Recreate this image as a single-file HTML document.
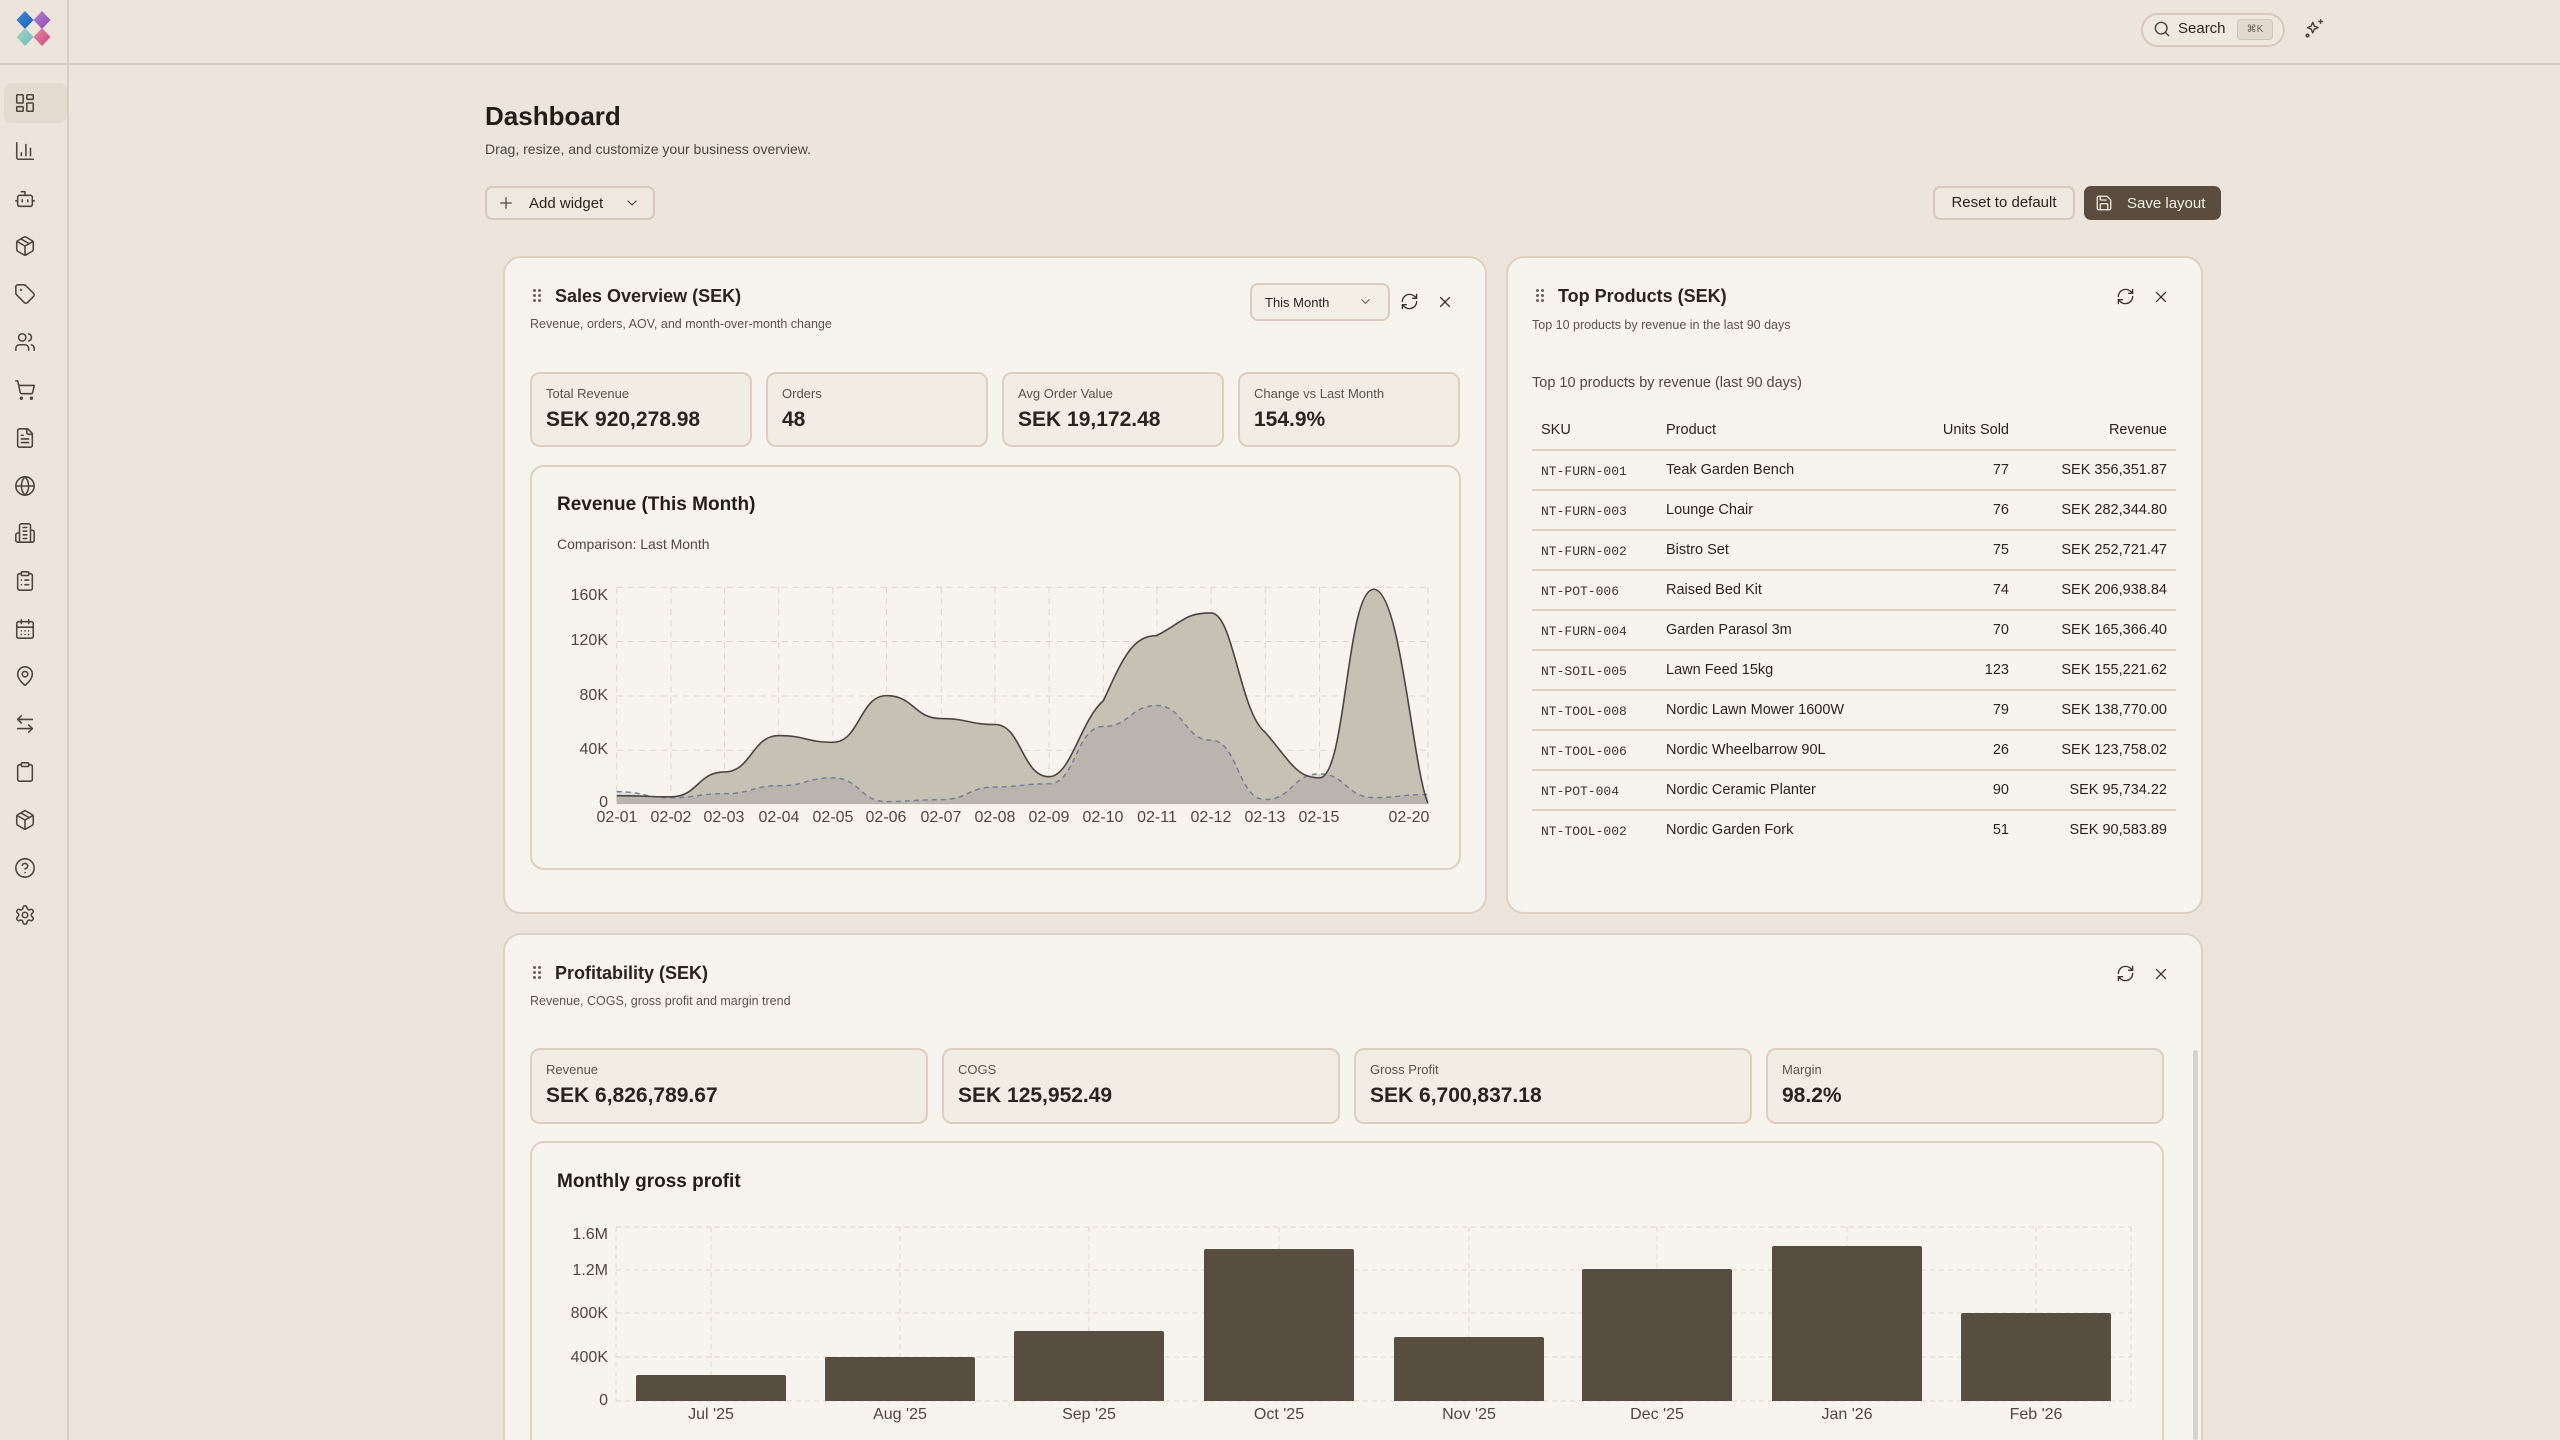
<!DOCTYPE html>
<html style="width:2560px;height:1440px;overflow:hidden"><head><meta charset="utf-8">
<style>
*{box-sizing:border-box;margin:0;padding:0}
body{width:2560px;height:1440px;overflow:hidden;background:#ede5dc;font-family:"Liberation Sans",sans-serif;color:#2a241f;position:relative}
.a{position:absolute}
.ic{position:absolute;width:22px;height:22px;fill:none;stroke:#4f453b;stroke-width:1.7;stroke-linecap:round;stroke-linejoin:round}
.card{position:absolute;background:#f7f4ee;border:2px solid #ddd1c4;border-radius:18px}
.stat{position:absolute;background:#f1ece4;border:2px solid #dccfc1;border-radius:10px}
.stat .l{position:absolute;left:14px;top:12px;font-size:13px;color:#5b534b}
.stat .v{position:absolute;left:14px;top:34px;font-size:21px;font-weight:bold;color:#2a241f}
.ttl{font-size:18px;font-weight:bold}
.sub{font-size:12.5px;color:#5b534b}
.drag{position:absolute;width:8px;height:14px}
.drag i{position:absolute;width:3px;height:3px;background:#6a6158;border-radius:50%}
.row{position:absolute;left:1532px;width:644px;height:40px;border-bottom:2px solid #ddd1c4;font-size:14.5px}
.row span{position:absolute;top:11px}
.sku{left:9px;font-family:"Liberation Mono",monospace;font-size:13px;top:13px!important;color:#3a332c}
.pr{left:134px}
.un{right:167px}
.rv{right:9px}
.yl{position:absolute;font-size:16px;color:#4f473f;text-align:right;width:60px}
.xl{position:absolute;font-size:16px;color:#4f473f;width:80px;text-align:center}
.bar{position:absolute;background:#584d41;width:150px;border-radius:2px 2px 0 0}
</style></head><body>
<!-- header -->
<div class="a" style="left:0;top:63px;width:2560px;height:2px;background:#d8cdc0"></div>
<div class="a" style="left:67px;top:0;width:2px;height:1440px;background:#d8cdc0"></div>
<svg class="a" style="left:0;top:0" width="70" height="60" viewBox="0 0 70 60">
<defs>
<linearGradient id="g1" x1="0" y1="0" x2="1" y2="1"><stop offset="0" stop-color="#3a8fd8"/><stop offset="1" stop-color="#1f5fb8"/></linearGradient>
<linearGradient id="g2" x1="0" y1="0" x2="1" y2="1"><stop offset="0" stop-color="#b77fd0"/><stop offset="1" stop-color="#8a4ab0"/></linearGradient>
<linearGradient id="g3" x1="0" y1="0" x2="1" y2="1"><stop offset="0" stop-color="#9fd8cf"/><stop offset="1" stop-color="#6fbab0"/></linearGradient>
<linearGradient id="g4" x1="0" y1="0" x2="1" y2="1"><stop offset="0" stop-color="#e58aa8"/><stop offset="1" stop-color="#c84a78"/></linearGradient>
</defs>
<path d="M25 11 L33.5 20 L25 29 L16.5 20Z" fill="url(#g1)"/>
<path d="M42 11 L50.5 20 L42 29 L33.5 20Z" fill="url(#g2)"/>
<path d="M25 28 L33.5 37 L25 46 L16.5 37Z" fill="url(#g3)"/>
<path d="M42 28 L50.5 37 L42 46 L33.5 37Z" fill="url(#g4)"/>
</svg>
<div class="a" style="left:2141px;top:13px;width:144px;height:34px;border:2px solid #d6c9bb;border-radius:17px;background:#efe8df"></div>
<svg class="ic" style="left:2152px;top:19px;width:20px;height:20px" viewBox="0 0 24 24"><circle cx="11" cy="11" r="7"/><path d="m20 20-4-4"/></svg>
<div class="a" style="left:2178px;top:20px;font-size:15px;color:#2f2822">Search</div>
<div class="a" style="left:2237px;top:19px;width:36px;height:21px;background:#e2d9cf;border:1px solid #d1c5b7;border-radius:4px;font-size:10px;color:#6a6158;text-align:center;line-height:19px">⌘K</div>
<svg class="ic" style="left:2304px;top:18px;width:21px;height:21px" viewBox="0 0 24 24"><path d="M10 5l1.8 4.2L16 11l-4.2 1.8L10 17l-1.8-4.2L4 11l4.2-1.8z"/><path d="M19 2v4M17 4h4"/><circle cx="4" cy="20" r="1.5"/></svg>

<!-- sidebar -->
<div class="a" style="left:4px;top:83px;width:63px;height:40px;background:#e3dad0;border-radius:8px"></div>
<svg class="ic" style="left:14px;top:92px" viewBox="0 0 24 24"><rect x="3" y="3" width="7" height="9" rx="1"/><rect x="14" y="3" width="7" height="5" rx="1"/><rect x="14" y="12" width="7" height="9" rx="1"/><rect x="3" y="16" width="7" height="5" rx="1"/></svg>
<svg class="ic" style="left:14px;top:140px" viewBox="0 0 24 24"><path d="M3 3v16a2 2 0 0 0 2 2h16"/><path d="M18 17V9"/><path d="M13 17V5"/><path d="M8 17v-3"/></svg>
<svg class="ic" style="left:14px;top:188px" viewBox="0 0 24 24"><path d="M12 8V4H8"/><rect width="16" height="12" x="4" y="8" rx="2"/><path d="M2 14h2M20 14h2M15 13v2M9 13v2"/></svg>
<svg class="ic" style="left:14px;top:235px" viewBox="0 0 24 24"><path d="M11 21.73a2 2 0 0 0 2 0l7-4A2 2 0 0 0 21 16V8a2 2 0 0 0-1-1.73l-7-4a2 2 0 0 0-2 0l-7 4A2 2 0 0 0 3 8v8a2 2 0 0 0 1 1.73z"/><path d="M12 22V12"/><path d="M3.3 7 12 12l8.7-5"/><path d="m7.5 4.27 9 5.15"/></svg>
<svg class="ic" style="left:14px;top:283px" viewBox="0 0 24 24"><path d="M12.586 2.586A2 2 0 0 0 11.172 2H4a2 2 0 0 0-2 2v7.172a2 2 0 0 0 .586 1.414l8.704 8.704a2.426 2.426 0 0 0 3.420 0l6.58-6.58a2.426 2.426 0 0 0 0-3.42z"/><circle cx="7.5" cy="7.5" r=".5"/></svg>
<svg class="ic" style="left:14px;top:331px" viewBox="0 0 24 24"><path d="M16 21v-2a4 4 0 0 0-4-4H6a4 4 0 0 0-4 4v2"/><circle cx="9" cy="7" r="4"/><path d="M22 21v-2a4 4 0 0 0-3-3.87"/><path d="M16 3.13a4 4 0 0 1 0 7.75"/></svg>
<svg class="ic" style="left:14px;top:379px" viewBox="0 0 24 24"><circle cx="8" cy="21" r="1"/><circle cx="19" cy="21" r="1"/><path d="M2.05 2.05h2l2.66 12.42a2 2 0 0 0 2 1.58h9.78a2 2 0 0 0 1.95-1.57l1.65-7.43H5.12"/></svg>
<svg class="ic" style="left:14px;top:427px" viewBox="0 0 24 24"><path d="M15 2H6a2 2 0 0 0-2 2v16a2 2 0 0 0 2 2h12a2 2 0 0 0 2-2V7Z"/><path d="M14 2v4a2 2 0 0 0 2 2h4"/><path d="M10 9H8M16 13H8M16 17H8"/></svg>
<svg class="ic" style="left:14px;top:475px" viewBox="0 0 24 24"><circle cx="12" cy="12" r="10"/><path d="M12 2a14.5 14.5 0 0 0 0 20 14.5 14.5 0 0 0 0-20"/><path d="M2 12h20"/></svg>
<svg class="ic" style="left:14px;top:522px" viewBox="0 0 24 24"><path d="M6 22V4a2 2 0 0 1 2-2h8a2 2 0 0 1 2 2v18Z"/><path d="M6 12H4a2 2 0 0 0-2 2v6a2 2 0 0 0 2 2h2"/><path d="M18 9h2a2 2 0 0 1 2 2v9a2 2 0 0 1-2 2h-2"/><path d="M10 6h4M10 10h4M10 14h4M10 18h4"/></svg>
<svg class="ic" style="left:14px;top:570px" viewBox="0 0 24 24"><rect width="8" height="4" x="8" y="2" rx="1"/><path d="M16 4h2a2 2 0 0 1 2 2v14a2 2 0 0 1-2 2H6a2 2 0 0 1-2-2V6a2 2 0 0 1 2-2h2"/><path d="M12 11h4M12 16h4M8 11h.01M8 16h.01"/></svg>
<svg class="ic" style="left:14px;top:618px" viewBox="0 0 24 24"><path d="M8 2v4M16 2v4"/><rect width="18" height="18" x="3" y="4" rx="2"/><path d="M3 10h18M8 14h.01M12 14h.01M16 14h.01M8 18h.01M12 18h.01M16 18h.01"/></svg>
<svg class="ic" style="left:14px;top:665px" viewBox="0 0 24 24"><path d="M20 10c0 4.993-5.539 10.193-7.399 11.799a1 1 0 0 1-1.202 0C9.539 20.193 4 14.993 4 10a8 8 0 0 1 16 0"/><circle cx="12" cy="10" r="3"/></svg>
<svg class="ic" style="left:14px;top:713px" viewBox="0 0 24 24"><path d="M8 3 4 7l4 4"/><path d="M4 7h16"/><path d="m16 21 4-4-4-4"/><path d="M20 17H4"/></svg>
<svg class="ic" style="left:14px;top:761px" viewBox="0 0 24 24"><rect width="8" height="4" x="8" y="2" rx="1"/><path d="M16 4h2a2 2 0 0 1 2 2v14a2 2 0 0 1-2 2H6a2 2 0 0 1-2-2V6a2 2 0 0 1 2-2h2"/></svg>
<svg class="ic" style="left:14px;top:809px" viewBox="0 0 24 24"><path d="M11 21.73a2 2 0 0 0 2 0l7-4A2 2 0 0 0 21 16V8a2 2 0 0 0-1-1.73l-7-4a2 2 0 0 0-2 0l-7 4A2 2 0 0 0 3 8v8a2 2 0 0 0 1 1.73z"/><path d="M12 22V12"/><path d="M3.3 7 12 12l8.7-5"/><path d="m7.5 4.27 9 5.15"/></svg>
<svg class="ic" style="left:14px;top:857px" viewBox="0 0 24 24"><circle cx="12" cy="12" r="10"/><path d="M9.09 9a3 3 0 0 1 5.83 1c0 2-3 3-3 3"/><path d="M12 17h.01"/></svg>
<svg class="ic" style="left:14px;top:904px" viewBox="0 0 24 24"><path d="M12.22 2h-.44a2 2 0 0 0-2 2v.18a2 2 0 0 1-1 1.73l-.43.25a2 2 0 0 1-2 0l-.15-.08a2 2 0 0 0-2.73.73l-.22.38a2 2 0 0 0 .73 2.730l.15.1a2 2 0 0 1 1 1.72v.51a2 2 0 0 1-1 1.74l-.15.09a2 2 0 0 0-.73 2.73l.22.38a2 2 0 0 0 2.73.73l.15-.08a2 2 0 0 1 2 0l.43.25a2 2 0 0 1 1 1.73V20a2 2 0 0 0 2 2h.44a2 2 0 0 0 2-2v-.18a2 2 0 0 1 1-1.73l.43-.25a2 2 0 0 1 2 0l.15.08a2 2 0 0 0 2.73-.73l.22-.39a2 2 0 0 0-.73-2.73l-.15-.08a2 2 0 0 1-1-1.74v-.5a2 2 0 0 1 1-1.74l.15-.09a2 2 0 0 0 .73-2.73l-.22-.38a2 2 0 0 0-2.73-.73l-.15.08a2 2 0 0 1-2 0l-.43-.25a2 2 0 0 1-1-1.73V4a2 2 0 0 0-2-2z"/><circle cx="12" cy="12" r="3"/></svg>

<!-- page header -->
<div class="a" style="left:485px;top:101px;font-size:26px;font-weight:bold;color:#231d18">Dashboard</div>
<div class="a" style="left:485px;top:141px;font-size:14px;color:#4f473f">Drag, resize, and customize your business overview.</div>
<div class="a" style="left:485px;top:186px;width:170px;height:34px;border:2px solid #d6c9bb;border-radius:7px;background:#efe8df"></div>
<svg class="ic" style="left:497px;top:194px;width:18px;height:18px" viewBox="0 0 24 24"><path d="M12 5v14M5 12h14"/></svg>
<div class="a" style="left:529px;top:195px;font-size:15px;color:#2a241f">Add widget</div>
<svg class="ic" style="left:624px;top:195px;width:16px;height:16px" viewBox="0 0 24 24"><path d="m6 9 6 6 6-6"/></svg>
<div class="a" style="left:1933px;top:186px;width:142px;height:34px;border:2px solid #d6c9bb;border-radius:7px;background:#efe8df;font-size:15px;text-align:center;line-height:30px;color:#2a241f">Reset to default</div>
<div class="a" style="left:2084px;top:186px;width:137px;height:34px;border-radius:7px;background:#5a4d40"></div>
<svg class="ic" style="left:2095px;top:194px;width:18px;height:18px;stroke:#f3ede5" viewBox="0 0 24 24"><path d="M15.2 3a2 2 0 0 1 1.4.6l3.8 3.8a2 2 0 0 1 .6 1.4V19a2 2 0 0 1-2 2H5a2 2 0 0 1-2-2V5a2 2 0 0 1 2-2z"/><path d="M17 21v-7a1 1 0 0 0-1-1H8a1 1 0 0 0-1 1v7"/><path d="M7 3v4a1 1 0 0 0 1 1h7"/></svg>
<div class="a" style="left:2127px;top:195px;font-size:15px;color:#f5efe7">Save layout</div>

<!-- Sales Overview -->
<div class="card" style="left:503px;top:256px;width:984px;height:658px"></div>
<div class="drag" style="left:533px;top:289px"><i style="left:0;top:0"></i><i style="left:5px;top:0"></i><i style="left:0;top:5px"></i><i style="left:5px;top:5px"></i><i style="left:0;top:10px"></i><i style="left:5px;top:10px"></i></div>
<div class="a ttl" style="left:555px;top:286px">Sales Overview (SEK)</div>
<div class="a sub" style="left:530px;top:317px">Revenue, orders, AOV, and month-over-month change</div>
<div class="a" style="left:1250px;top:283px;width:140px;height:38px;border:2px solid #d9ccbe;border-radius:8px;background:#f3eee6;font-size:13px;padding:10px 0 0 13px;color:#2a241f">This Month</div>
<svg class="ic" style="left:1358px;top:294px;width:15px;height:15px;stroke:#6a6158" viewBox="0 0 24 24"><path d="m6 9 6 6 6-6"/></svg>
<svg class="ic" style="left:1400px;top:292px;width:19px;height:19px;stroke:#3a322b" viewBox="0 0 24 24"><path d="M3 12a9 9 0 0 1 9-9 9.75 9.75 0 0 1 6.74 2.74L21 8"/><path d="M21 3v5h-5"/><path d="M21 12a9 9 0 0 1-9 9 9.75 9.75 0 0 1-6.74-2.74L3 16"/><path d="M8 16H3v5"/></svg>
<svg class="ic" style="left:1436px;top:293px;width:18px;height:18px;stroke:#3a322b" viewBox="0 0 24 24"><path d="M18 6 6 18M6 6l12 12"/></svg>

<div class="stat" style="left:530px;top:372px;width:222px;height:75px"><div class="l">Total Revenue</div><div class="v">SEK 920,278.98</div></div>
<div class="stat" style="left:766px;top:372px;width:222px;height:75px"><div class="l">Orders</div><div class="v">48</div></div>
<div class="stat" style="left:1002px;top:372px;width:222px;height:75px"><div class="l">Avg Order Value</div><div class="v">SEK 19,172.48</div></div>
<div class="stat" style="left:1238px;top:372px;width:222px;height:75px"><div class="l">Change vs Last Month</div><div class="v">154.9%</div></div>

<div class="a" style="left:530px;top:465px;width:931px;height:405px;border:2px solid #ddd1c4;border-radius:14px;background:#f7f4ee"></div>
<div class="a" style="left:557px;top:494px;font-size:19px;font-weight:bold;color:#231d18">Revenue (This Month)</div>
<div class="a" style="left:557px;top:536px;font-size:14px;color:#4f473f">Comparison: Last Month</div>
<svg class="a" style="left:500px;top:250px" width="1000" height="620" viewBox="0 0 1568 1568" preserveAspectRatio="none">
<g stroke="#ddd6cc" stroke-dasharray="6 5" fill="none">
<path vector-effect="non-scaling-stroke" d="M183 853H1455M183 990H1455M183 1128H1455M183 1265H1455"/>
<path vector-effect="non-scaling-stroke" d="M183 853V1400M268 853V1400M352 853V1400M437 853V1400M522 853V1400M606 853V1400M692 853V1400M776 853V1400M861 853V1400M946 853V1400M1030 853V1400M1115 853V1400M1200 853V1400M1285 853V1400M1370 853V1400M1455 853V1400"/>
</g>
<path d="M183,1380 C225,1380 226,1383 268,1383 C310,1383 310,1320 352,1320 C394,1320 395,1228 437,1228 C479,1228 480,1245 522,1245 C564,1245 564,1127 606,1127 C649,1127 649,1185 692,1185 C734,1185 734,1200 776,1200 C818,1200 818,1332 861,1332 C895,1332 910,1190 946,1140 C975,1040 990,975 1030,975 C1072,940 1073,918 1115,918 C1150,918 1160,1170 1200,1220 C1242,1300 1250,1335 1285,1335 C1327,1335 1327,858 1370,858 C1412,858 1430,1300 1455,1400 L183,1400Z" fill="#c6c1b5"/>
<path d="M183,1370 C225,1370 226,1385 268,1385 C310,1385 310,1375 352,1375 C394,1375 395,1355 437,1355 C479,1355 480,1335 522,1335 C564,1335 564,1395 606,1395 C649,1395 649,1390 692,1390 C734,1390 734,1358 776,1358 C818,1358 818,1350 861,1350 C903,1350 903,1205 946,1205 C988,1205 988,1152 1030,1152 C1072,1152 1073,1240 1115,1240 C1157,1240 1157,1390 1200,1390 C1242,1390 1242,1325 1285,1325 C1327,1325 1327,1385 1370,1385 C1412,1385 1412,1377 1455,1377 L1455,1400 L183,1400Z" fill="#8e8e94" fill-opacity="0.22"/>
<path d="M183,1370 C225,1370 226,1385 268,1385 C310,1385 310,1375 352,1375 C394,1375 395,1355 437,1355 C479,1355 480,1335 522,1335 C564,1335 564,1395 606,1395 C649,1395 649,1390 692,1390 C734,1390 734,1358 776,1358 C818,1358 818,1350 861,1350 C903,1350 903,1205 946,1205 C988,1205 988,1152 1030,1152 C1072,1152 1073,1240 1115,1240 C1157,1240 1157,1390 1200,1390 C1242,1390 1242,1325 1285,1325 C1327,1325 1327,1385 1370,1385 C1412,1385 1412,1377 1455,1377" fill="none" stroke="#7a7f90" stroke-width="1.5" stroke-dasharray="5 4" vector-effect="non-scaling-stroke"/>
<path d="M183,1380 C225,1380 226,1383 268,1383 C310,1383 310,1320 352,1320 C394,1320 395,1228 437,1228 C479,1228 480,1245 522,1245 C564,1245 564,1127 606,1127 C649,1127 649,1185 692,1185 C734,1185 734,1200 776,1200 C818,1200 818,1332 861,1332 C895,1332 910,1190 946,1140 C975,1040 990,975 1030,975 C1072,940 1073,918 1115,918 C1150,918 1160,1170 1200,1220 C1242,1300 1250,1335 1285,1335 C1327,1335 1327,858 1370,858 C1412,858 1430,1300 1455,1400" fill="none" stroke="#4a4540" stroke-width="1.6" vector-effect="non-scaling-stroke"/>
<path d="M183 1400H1455" stroke="#b9b2a8" stroke-width="1" vector-effect="non-scaling-stroke"/>
</svg>
<div class="yl" style="left:548px;top:587px">160K</div>
<div class="yl" style="left:548px;top:632px">120K</div>
<div class="yl" style="left:548px;top:687px">80K</div>
<div class="yl" style="left:548px;top:741px">40K</div>
<div class="yl" style="left:548px;top:794px">0</div>
<div class="xl" style="left:577px;top:809px">02-01</div>
<div class="xl" style="left:631px;top:809px">02-02</div>
<div class="xl" style="left:684px;top:809px">02-03</div>
<div class="xl" style="left:739px;top:809px">02-04</div>
<div class="xl" style="left:793px;top:809px">02-05</div>
<div class="xl" style="left:846px;top:809px">02-06</div>
<div class="xl" style="left:901px;top:809px">02-07</div>
<div class="xl" style="left:955px;top:809px">02-08</div>
<div class="xl" style="left:1009px;top:809px">02-09</div>
<div class="xl" style="left:1063px;top:809px">02-10</div>
<div class="xl" style="left:1117px;top:809px">02-11</div>
<div class="xl" style="left:1171px;top:809px">02-12</div>
<div class="xl" style="left:1225px;top:809px">02-13</div>
<div class="xl" style="left:1279px;top:809px">02-15</div>
<div class="xl" style="left:1369px;top:809px">02-20</div>

<!-- Top products -->
<div class="card" style="left:1506px;top:256px;width:697px;height:658px"></div>
<div class="drag" style="left:1536px;top:289px"><i style="left:0;top:0"></i><i style="left:5px;top:0"></i><i style="left:0;top:5px"></i><i style="left:5px;top:5px"></i><i style="left:0;top:10px"></i><i style="left:5px;top:10px"></i></div>
<div class="a ttl" style="left:1558px;top:286px">Top Products (SEK)</div>
<div class="a sub" style="left:1532px;top:318px">Top 10 products by revenue in the last 90 days</div>
<svg class="ic" style="left:2116px;top:287px;width:19px;height:19px;stroke:#3a322b" viewBox="0 0 24 24"><path d="M3 12a9 9 0 0 1 9-9 9.75 9.75 0 0 1 6.74 2.74L21 8"/><path d="M21 3v5h-5"/><path d="M21 12a9 9 0 0 1-9 9 9.75 9.75 0 0 1-6.74-2.74L3 16"/><path d="M8 16H3v5"/></svg>
<svg class="ic" style="left:2152px;top:288px;width:18px;height:18px;stroke:#3a322b" viewBox="0 0 24 24"><path d="M18 6 6 18M6 6l12 12"/></svg>
<div class="a" style="left:1532px;top:375px;font-size:14.5px;color:#4f473f">Top 10 products by revenue (last 90 days)</div>
<div class="row" style="top:411px;color:#2a241f;font-size:14.5px"><span style="left:9px">SKU</span><span class="pr">Product</span><span class="un">Units Sold</span><span class="rv">Revenue</span></div>
<div class="row" style="top:451px"><span class="sku">NT-FURN-001</span><span class="pr">Teak Garden Bench</span><span class="un">77</span><span class="rv">SEK 356,351.87</span></div>
<div class="row" style="top:491px"><span class="sku">NT-FURN-003</span><span class="pr">Lounge Chair</span><span class="un">76</span><span class="rv">SEK 282,344.80</span></div>
<div class="row" style="top:531px"><span class="sku">NT-FURN-002</span><span class="pr">Bistro Set</span><span class="un">75</span><span class="rv">SEK 252,721.47</span></div>
<div class="row" style="top:571px"><span class="sku">NT-POT-006</span><span class="pr">Raised Bed Kit</span><span class="un">74</span><span class="rv">SEK 206,938.84</span></div>
<div class="row" style="top:611px"><span class="sku">NT-FURN-004</span><span class="pr">Garden Parasol 3m</span><span class="un">70</span><span class="rv">SEK 165,366.40</span></div>
<div class="row" style="top:651px"><span class="sku">NT-SOIL-005</span><span class="pr">Lawn Feed 15kg</span><span class="un">123</span><span class="rv">SEK 155,221.62</span></div>
<div class="row" style="top:691px"><span class="sku">NT-TOOL-008</span><span class="pr">Nordic Lawn Mower 1600W</span><span class="un">79</span><span class="rv">SEK 138,770.00</span></div>
<div class="row" style="top:731px"><span class="sku">NT-TOOL-006</span><span class="pr">Nordic Wheelbarrow 90L</span><span class="un">26</span><span class="rv">SEK 123,758.02</span></div>
<div class="row" style="top:771px"><span class="sku">NT-POT-004</span><span class="pr">Nordic Ceramic Planter</span><span class="un">90</span><span class="rv">SEK 95,734.22</span></div>
<div class="row" style="top:811px;border-bottom:none"><span class="sku">NT-TOOL-002</span><span class="pr">Nordic Garden Fork</span><span class="un">51</span><span class="rv">SEK 90,583.89</span></div>

<!-- Profitability -->
<div class="card" style="left:503px;top:933px;width:1700px;height:560px"></div>
<div class="a" style="left:2193px;top:1050px;width:5px;height:390px;background:#d9d2c8;border-radius:3px"></div>
<div class="drag" style="left:533px;top:966px"><i style="left:0;top:0"></i><i style="left:5px;top:0"></i><i style="left:0;top:5px"></i><i style="left:5px;top:5px"></i><i style="left:0;top:10px"></i><i style="left:5px;top:10px"></i></div>
<div class="a ttl" style="left:555px;top:963px">Profitability (SEK)</div>
<div class="a sub" style="left:530px;top:994px">Revenue, COGS, gross profit and margin trend</div>
<svg class="ic" style="left:2116px;top:964px;width:19px;height:19px;stroke:#3a322b" viewBox="0 0 24 24"><path d="M3 12a9 9 0 0 1 9-9 9.75 9.75 0 0 1 6.74 2.74L21 8"/><path d="M21 3v5h-5"/><path d="M21 12a9 9 0 0 1-9 9 9.75 9.75 0 0 1-6.74-2.74L3 16"/><path d="M8 16H3v5"/></svg>
<svg class="ic" style="left:2152px;top:965px;width:18px;height:18px;stroke:#3a322b" viewBox="0 0 24 24"><path d="M18 6 6 18M6 6l12 12"/></svg>
<div class="stat" style="left:530px;top:1048px;width:398px;height:76px"><div class="l">Revenue</div><div class="v">SEK 6,826,789.67</div></div>
<div class="stat" style="left:942px;top:1048px;width:398px;height:76px"><div class="l">COGS</div><div class="v">SEK 125,952.49</div></div>
<div class="stat" style="left:1354px;top:1048px;width:398px;height:76px"><div class="l">Gross Profit</div><div class="v">SEK 6,700,837.18</div></div>
<div class="stat" style="left:1766px;top:1048px;width:398px;height:76px"><div class="l">Margin</div><div class="v">98.2%</div></div>
<div class="a" style="left:530px;top:1141px;width:1634px;height:360px;border:2px solid #ddd1c4;border-radius:14px;background:#f7f4ee"></div>
<div class="a" style="left:557px;top:1171px;font-size:19px;font-weight:bold;color:#231d18">Monthly gross profit</div>
<svg class="a" style="left:0;top:0" width="2560" height="1440">
<g stroke="#ddd6cc" stroke-dasharray="5 4" fill="none">
<path d="M616 1227H2131M616 1270H2131M616 1313H2131M616 1357H2131M616 1401H2131"/>
<path d="M616 1227V1401M711 1227V1401M900 1227V1401M1089 1227V1401M1279 1227V1401M1469 1227V1401M1657 1227V1401M1847 1227V1401M2036 1227V1401M2131 1227V1401"/>
</g></svg>
<div class="yl" style="left:548px;top:1226px">1.6M</div>
<div class="yl" style="left:548px;top:1262px">1.2M</div>
<div class="yl" style="left:548px;top:1305px">800K</div>
<div class="yl" style="left:548px;top:1349px">400K</div>
<div class="yl" style="left:548px;top:1392px">0</div>
<div class="bar" style="left:636px;top:1375px;height:26px"></div>
<div class="bar" style="left:825px;top:1357px;height:44px"></div>
<div class="bar" style="left:1014px;top:1331px;height:70px"></div>
<div class="bar" style="left:1204px;top:1249px;height:152px"></div>
<div class="bar" style="left:1394px;top:1337px;height:64px"></div>
<div class="bar" style="left:1582px;top:1269px;height:132px"></div>
<div class="bar" style="left:1772px;top:1246px;height:155px"></div>
<div class="bar" style="left:1961px;top:1313px;height:88px"></div>
<div class="xl" style="left:671px;top:1406px">Jul '25</div>
<div class="xl" style="left:860px;top:1406px">Aug '25</div>
<div class="xl" style="left:1049px;top:1406px">Sep '25</div>
<div class="xl" style="left:1239px;top:1406px">Oct '25</div>
<div class="xl" style="left:1429px;top:1406px">Nov '25</div>
<div class="xl" style="left:1617px;top:1406px">Dec '25</div>
<div class="xl" style="left:1807px;top:1406px">Jan '26</div>
<div class="xl" style="left:1996px;top:1406px">Feb '26</div>
</body></html>
